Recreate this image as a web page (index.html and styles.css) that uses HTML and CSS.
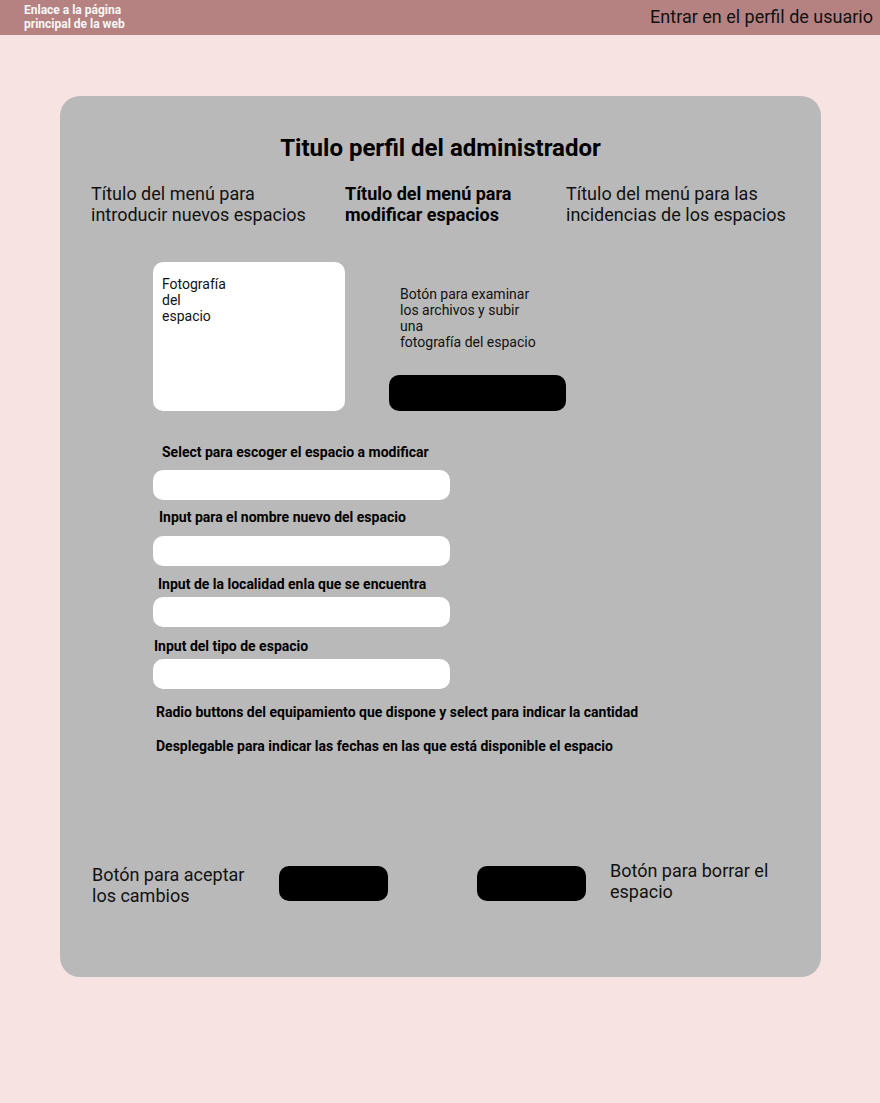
FILE: index.html
```html
<!DOCTYPE html>
<html lang="es">
<head>
<meta charset="utf-8">
<title>Perfil del administrador</title>
<link rel="stylesheet" href="styles.css">
</head>
<body>
<header class="topbar">
  <a class="home-link" href="#">Enlace a la página<br>principal de la web</a>
  <a class="profile-link" href="#">Entrar en el perfil de usuario</a>
</header>
<main class="card">
  <h1 class="title">Titulo perfil del administrador</h1>
  <nav class="menus">
    <div class="menu">Título del menú para<br>introducir nuevos espacios</div>
    <div class="menu menu-active">Título del menú para<br>modificar espacios</div>
    <div class="menu">Título del menú para las<br>incidencias de los espacios</div>
  </nav>
  <section class="photo-row">
    <div class="photo"><p class="photo-text">Fotografía<br>del<br>espacio</p></div>
    <div class="upload">
      <p class="upload-text">Botón para examinar<br>los archivos y subir<br>una<br>fotografía del espacio</p>
      <div class="black-btn upload-btn"></div>
    </div>
  </section>
  <section class="form">
    <div class="label l1">Select para escoger el espacio a modificar</div>
    <div class="field f1"></div>
    <div class="label l2">Input para el nombre nuevo del espacio</div>
    <div class="field f2"></div>
    <div class="label l3">Input de la localidad enla que se encuentra</div>
    <div class="field f3"></div>
    <div class="label l4">Input del tipo de espacio</div>
    <div class="field f4"></div>
    <div class="label l5">Radio buttons del equipamiento que dispone y select para indicar la cantidad</div>
    <div class="label l6">Desplegable para indicar las fechas en las que está disponible el espacio</div>
  </section>
  <section class="actions">
    <div class="action-text accept-text">Botón para aceptar<br>los cambios</div>
    <div class="black-btn small-btn"></div>
    <div class="black-btn small-btn delete-btn"></div>
    <div class="action-text delete-text">Botón para borrar el<br>espacio</div>
  </section>
</main>
</body>
</html>
```

FILE: styles.css
```css
* { box-sizing: border-box; }
html, body { margin: 0; padding: 0; }
body {
  background: #f8e3e3;
  font-family: Roboto, "Noto Sans", sans-serif;
  color: #111;
  width: 880px;
  height: 1103px;
}
.topbar {
  height: 35px;
  background: #b58281;
  display: flex;
  justify-content: space-between;
  align-items: flex-start;
  padding: 2px 7px 0 24px;
}
.home-link {
  color: #f7f7f7;
  font-weight: 700;
  font-size: 12px;
  line-height: 14px;
  margin-top: 1px;
  text-decoration: none;
}
.profile-link {
  color: #111;
  font-size: 18px;
  line-height: 20px;
  margin-top: 5px;
  text-decoration: none;
}
.card {
  margin: 61px 0 0 60px;
  width: 761px;
  height: 881px;
  background: #b9b9b9;
  border-radius: 20px;
  padding: 38px 0 0 0;
  display: flex;
  flex-direction: column;
}
.title {
  margin: 0;
  font-size: 24px;
  line-height: 28px;
  font-weight: 700;
  text-align: center;
  color: #000;
}
.menus {
  margin-top: 21px;
  display: grid;
  grid-template-columns: 254px 221px auto;
  padding-left: 31px;
}
.menu {
  font-size: 18px;
  line-height: 21px;
  color: #111;
}
.menu-active { font-weight: 700; color: #000; }
.photo-row {
  margin-top: 37px;
  display: flex;
  padding-left: 93px;
  gap: 44px;
}
.photo {
  width: 192px;
  height: 149px;
  background: #fff;
  border-radius: 10px;
  padding: 14px 9px;
}
.photo-text {
  margin: 0;
  font-size: 14px;
  line-height: 16px;
  color: #111;
}
.upload {
  display: flex;
  flex-direction: column;
}
.upload-text {
  margin: 24px 0 0 11px;
  font-size: 14px;
  line-height: 16px;
  color: #111;
}
.black-btn {
  background: #000;
  border-radius: 10px;
}
.upload-btn {
  margin-top: 25px;
  width: 177px;
  height: 36px;
}
.form {
  margin-top: 33px;
  padding-left: 93px;
  display: flex;
  flex-direction: column;
  align-items: flex-start;
}
.label {
  font-size: 14px;
  line-height: 16px;
  font-weight: 700;
  color: #000;
  white-space: nowrap;
}
.field {
  width: 297px;
  height: 30px;
  background: #fff;
  border-radius: 10px;
}
.l1 { margin-left: 9px; }
.f1 { margin-top: 10px; }
.l2 { margin-left: 6px; margin-top: 9px; }
.f2 { margin-top: 11px; }
.l3 { margin-left: 5px; margin-top: 10px; }
.f3 { margin-top: 5px; }
.l4 { margin-left: 1px; margin-top: 11px; }
.f4 { margin-top: 5px; }
.l5 { margin-left: 3px; margin-top: 15px; }
.l6 { margin-left: 3px; margin-top: 18px; }
.actions {
  margin-top: 106px;
  display: flex;
  align-items: flex-start;
  padding-left: 32px;
}
.action-text {
  font-size: 18px;
  line-height: 21px;
  color: #111;
}
.accept-text {
  width: 187px;
  margin-top: 4px;
}
.small-btn {
  width: 109px;
  height: 35px;
  margin-top: 6px;
}
.delete-btn { margin-left: 89px; }
.delete-text { margin-left: 24px; }
```
